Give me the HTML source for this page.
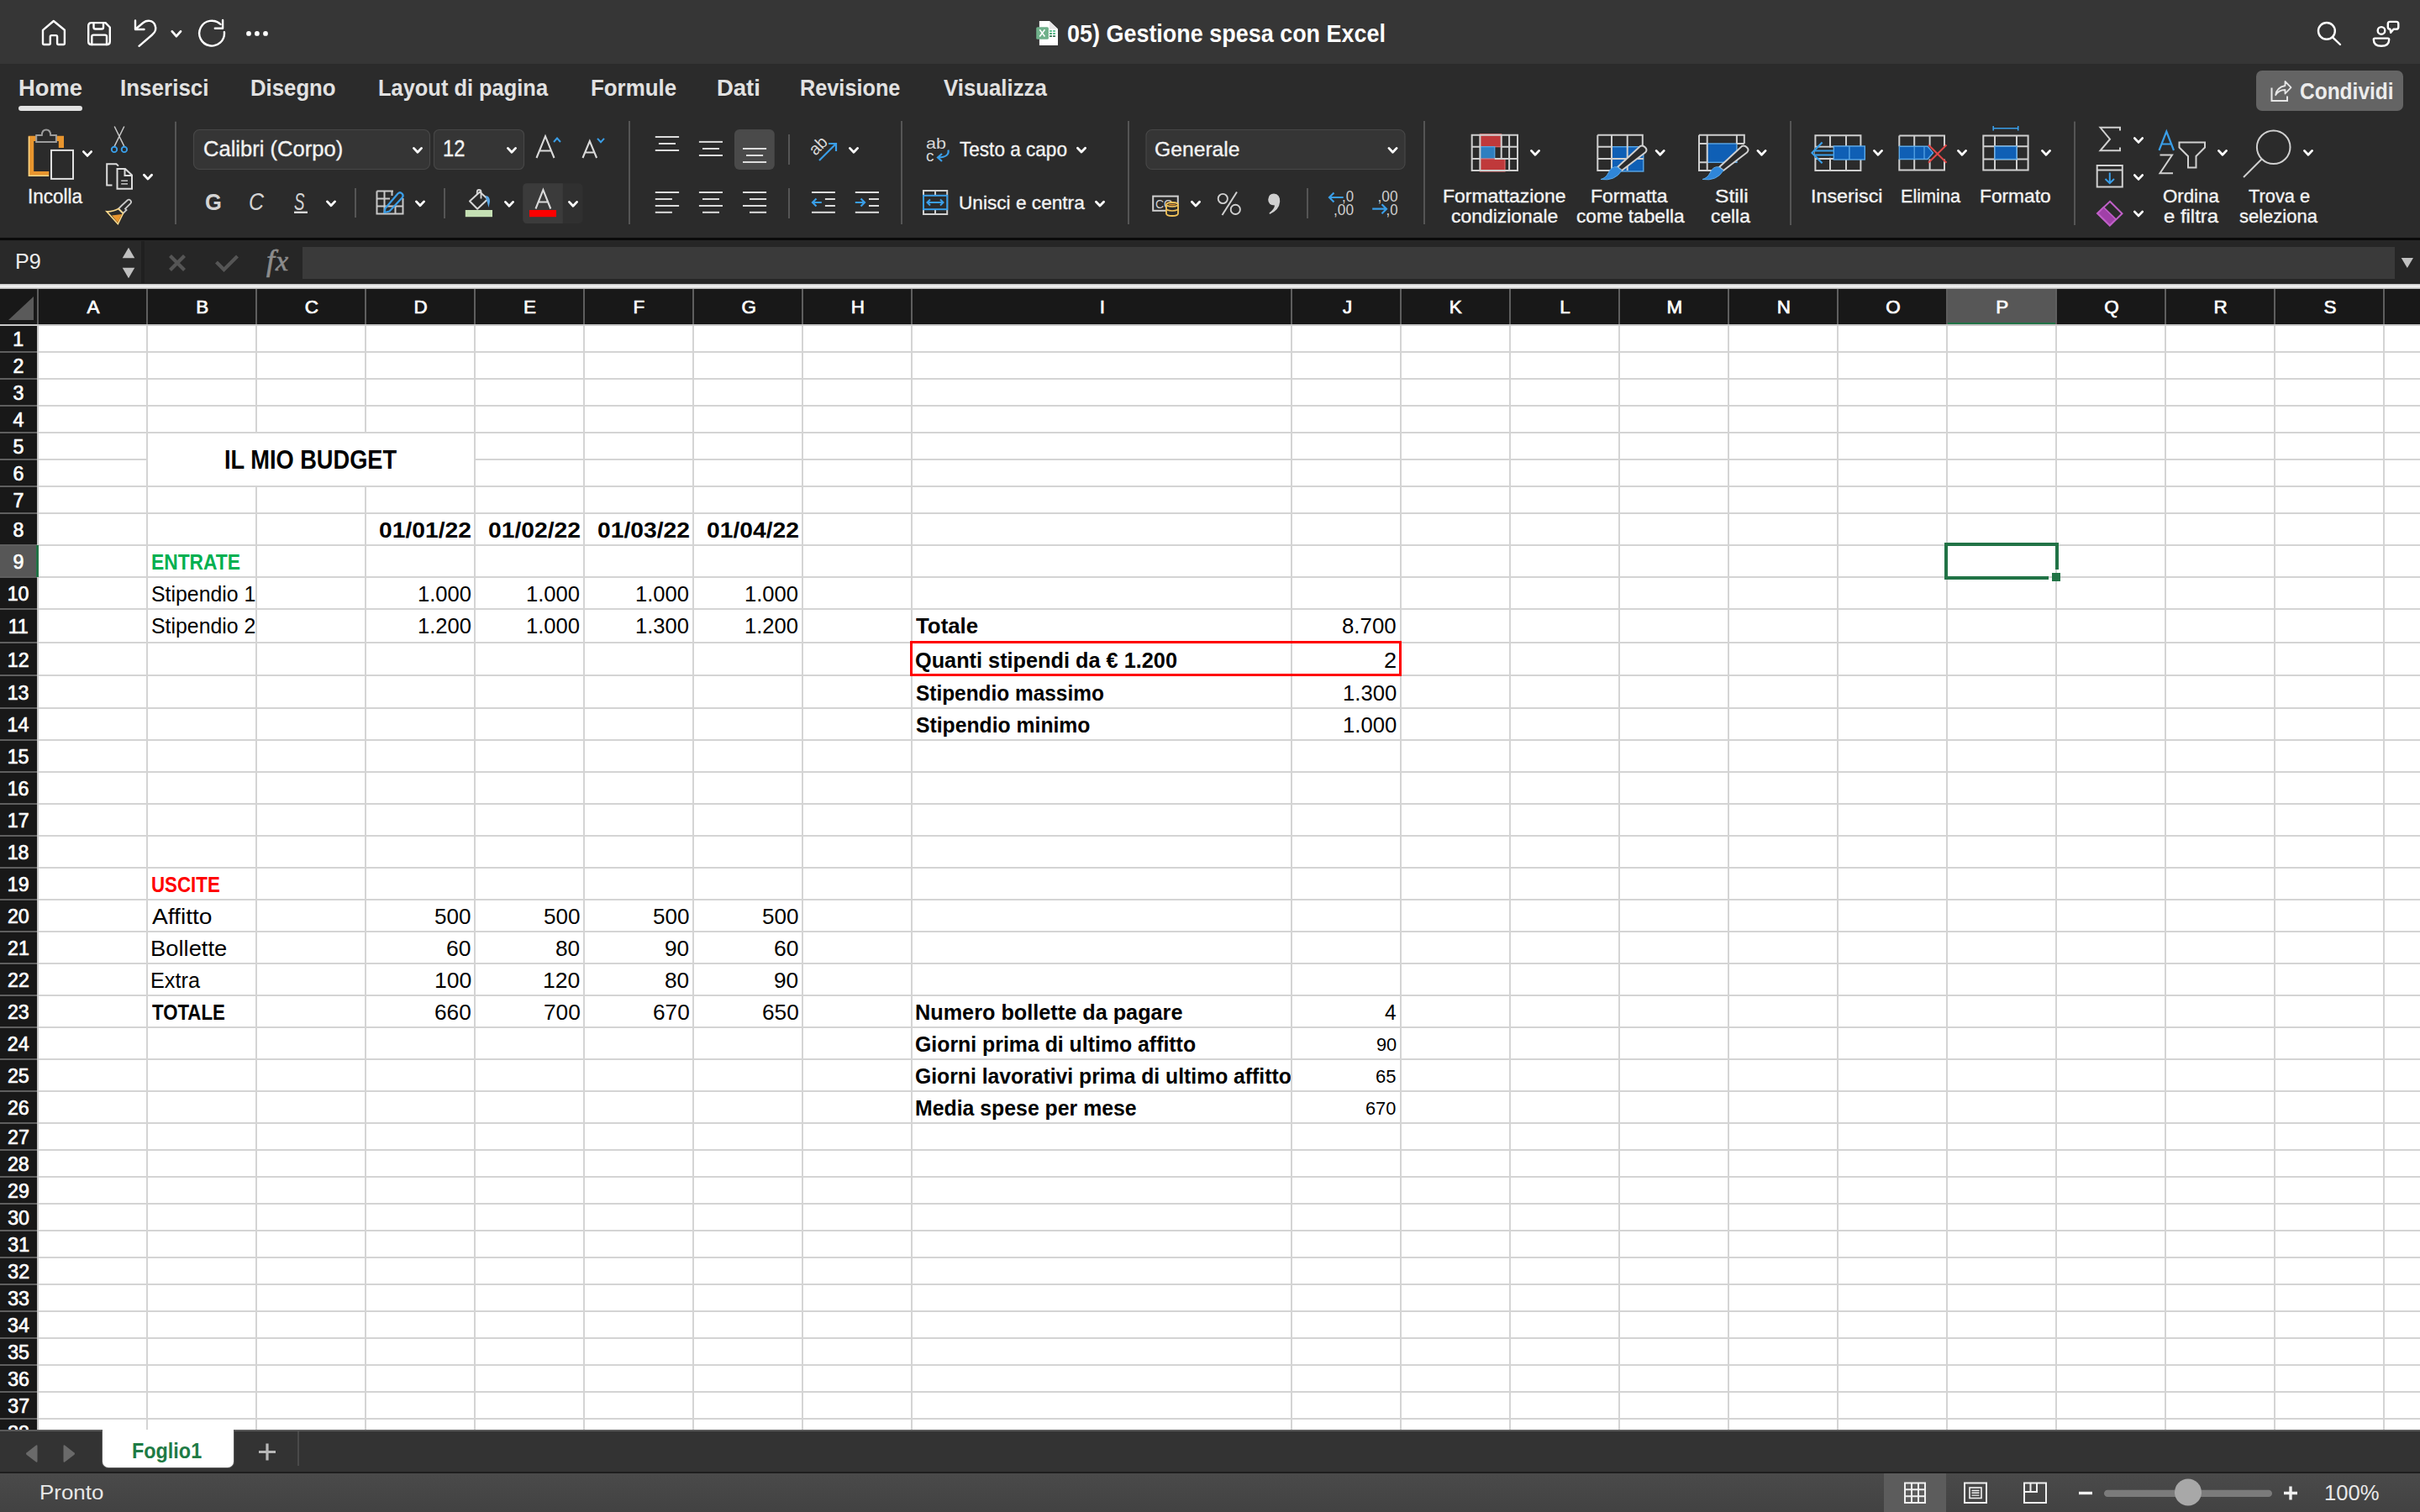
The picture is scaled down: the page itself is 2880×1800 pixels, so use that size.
<!DOCTYPE html>
<html><head><meta charset="utf-8"><style>
html,body{margin:0;padding:0;width:2880px;height:1800px;overflow:hidden;background:#2b2b2b;font-family:"Liberation Sans",sans-serif;}
.t{position:absolute;line-height:0;white-space:pre;transform-origin:0 0;}
svg{overflow:visible}
</style></head><body>
<div style="position:absolute;left:0px;top:0px;width:2880px;height:76px;background:#363636;"></div><div style="position:absolute;left:0px;top:76px;width:2880px;height:208px;background:#2b2b2b;"></div><div style="position:absolute;left:0px;top:283px;width:2880px;height:3px;background:#0a0a0a;"></div><div style="position:absolute;left:0px;top:286px;width:2880px;height:52px;background:#262626;"></div><div style="position:absolute;left:0px;top:287px;width:168px;height:50px;background:#292929;"></div><div style="position:absolute;left:168px;top:287px;width:4px;height:50px;background:#202020;"></div><div style="position:absolute;left:360px;top:294px;width:2490px;height:38px;background:#3a3a3a;"></div><div style="position:absolute;left:0;top:338px;width:2880px;height:6px;background:linear-gradient(#bdbdbd,#f2f2f2 40%,#e6e6e6 70%,#a8a8a8)"></div><div style="position:absolute;left:0px;top:344px;width:2880px;height:42px;background:#181818;"></div><div style="position:absolute;left:46px;top:388px;width:2834px;height:1314px;background:#ffffff;"></div><div style="position:absolute;left:0px;top:386px;width:46px;height:1316px;background:#181818;"></div><div style="position:absolute;left:2317px;top:344px;width:130px;height:40px;background:#575757;"></div><div style="position:absolute;left:2317px;top:384px;width:130px;height:4px;background:#217346;"></div><div style="position:absolute;left:0px;top:649px;width:43px;height:38px;background:#575757;"></div><div style="position:absolute;left:46px;top:418px;width:2834px;height:2px;background:#d4d4d4;"></div><div style="position:absolute;left:0px;top:418px;width:44px;height:2px;background:#5e5e5e;"></div><div style="position:absolute;left:46px;top:450px;width:2834px;height:2px;background:#d4d4d4;"></div><div style="position:absolute;left:0px;top:450px;width:44px;height:2px;background:#5e5e5e;"></div><div style="position:absolute;left:46px;top:482px;width:2834px;height:2px;background:#d4d4d4;"></div><div style="position:absolute;left:0px;top:482px;width:44px;height:2px;background:#5e5e5e;"></div><div style="position:absolute;left:46px;top:514px;width:2834px;height:2px;background:#d4d4d4;"></div><div style="position:absolute;left:0px;top:514px;width:44px;height:2px;background:#5e5e5e;"></div><div style="position:absolute;left:46px;top:546px;width:129px;height:2px;background:#d4d4d4;"></div><div style="position:absolute;left:565px;top:546px;width:2315px;height:2px;background:#d4d4d4;"></div><div style="position:absolute;left:0px;top:546px;width:44px;height:2px;background:#5e5e5e;"></div><div style="position:absolute;left:46px;top:578px;width:2834px;height:2px;background:#d4d4d4;"></div><div style="position:absolute;left:0px;top:578px;width:44px;height:2px;background:#5e5e5e;"></div><div style="position:absolute;left:46px;top:610px;width:2834px;height:2px;background:#d4d4d4;"></div><div style="position:absolute;left:0px;top:610px;width:44px;height:2px;background:#5e5e5e;"></div><div style="position:absolute;left:46px;top:648px;width:2834px;height:2px;background:#d4d4d4;"></div><div style="position:absolute;left:0px;top:648px;width:44px;height:2px;background:#5e5e5e;"></div><div style="position:absolute;left:46px;top:686px;width:2834px;height:2px;background:#d4d4d4;"></div><div style="position:absolute;left:0px;top:686px;width:44px;height:2px;background:#5e5e5e;"></div><div style="position:absolute;left:46px;top:724px;width:2834px;height:2px;background:#d4d4d4;"></div><div style="position:absolute;left:0px;top:724px;width:44px;height:2px;background:#5e5e5e;"></div><div style="position:absolute;left:46px;top:764px;width:2834px;height:2px;background:#d4d4d4;"></div><div style="position:absolute;left:0px;top:764px;width:44px;height:2px;background:#5e5e5e;"></div><div style="position:absolute;left:46px;top:803px;width:2834px;height:2px;background:#d4d4d4;"></div><div style="position:absolute;left:0px;top:803px;width:44px;height:2px;background:#5e5e5e;"></div><div style="position:absolute;left:46px;top:842px;width:2834px;height:2px;background:#d4d4d4;"></div><div style="position:absolute;left:0px;top:842px;width:44px;height:2px;background:#5e5e5e;"></div><div style="position:absolute;left:46px;top:880px;width:2834px;height:2px;background:#d4d4d4;"></div><div style="position:absolute;left:0px;top:880px;width:44px;height:2px;background:#5e5e5e;"></div><div style="position:absolute;left:46px;top:918px;width:2834px;height:2px;background:#d4d4d4;"></div><div style="position:absolute;left:0px;top:918px;width:44px;height:2px;background:#5e5e5e;"></div><div style="position:absolute;left:46px;top:956px;width:2834px;height:2px;background:#d4d4d4;"></div><div style="position:absolute;left:0px;top:956px;width:44px;height:2px;background:#5e5e5e;"></div><div style="position:absolute;left:46px;top:994px;width:2834px;height:2px;background:#d4d4d4;"></div><div style="position:absolute;left:0px;top:994px;width:44px;height:2px;background:#5e5e5e;"></div><div style="position:absolute;left:46px;top:1032px;width:2834px;height:2px;background:#d4d4d4;"></div><div style="position:absolute;left:0px;top:1032px;width:44px;height:2px;background:#5e5e5e;"></div><div style="position:absolute;left:46px;top:1070px;width:2834px;height:2px;background:#d4d4d4;"></div><div style="position:absolute;left:0px;top:1070px;width:44px;height:2px;background:#5e5e5e;"></div><div style="position:absolute;left:46px;top:1108px;width:2834px;height:2px;background:#d4d4d4;"></div><div style="position:absolute;left:0px;top:1108px;width:44px;height:2px;background:#5e5e5e;"></div><div style="position:absolute;left:46px;top:1146px;width:2834px;height:2px;background:#d4d4d4;"></div><div style="position:absolute;left:0px;top:1146px;width:44px;height:2px;background:#5e5e5e;"></div><div style="position:absolute;left:46px;top:1184px;width:2834px;height:2px;background:#d4d4d4;"></div><div style="position:absolute;left:0px;top:1184px;width:44px;height:2px;background:#5e5e5e;"></div><div style="position:absolute;left:46px;top:1222px;width:2834px;height:2px;background:#d4d4d4;"></div><div style="position:absolute;left:0px;top:1222px;width:44px;height:2px;background:#5e5e5e;"></div><div style="position:absolute;left:46px;top:1260px;width:2834px;height:2px;background:#d4d4d4;"></div><div style="position:absolute;left:0px;top:1260px;width:44px;height:2px;background:#5e5e5e;"></div><div style="position:absolute;left:46px;top:1298px;width:2834px;height:2px;background:#d4d4d4;"></div><div style="position:absolute;left:0px;top:1298px;width:44px;height:2px;background:#5e5e5e;"></div><div style="position:absolute;left:46px;top:1336px;width:2834px;height:2px;background:#d4d4d4;"></div><div style="position:absolute;left:0px;top:1336px;width:44px;height:2px;background:#5e5e5e;"></div><div style="position:absolute;left:46px;top:1368px;width:2834px;height:2px;background:#d4d4d4;"></div><div style="position:absolute;left:0px;top:1368px;width:44px;height:2px;background:#5e5e5e;"></div><div style="position:absolute;left:46px;top:1400px;width:2834px;height:2px;background:#d4d4d4;"></div><div style="position:absolute;left:0px;top:1400px;width:44px;height:2px;background:#5e5e5e;"></div><div style="position:absolute;left:46px;top:1432px;width:2834px;height:2px;background:#d4d4d4;"></div><div style="position:absolute;left:0px;top:1432px;width:44px;height:2px;background:#5e5e5e;"></div><div style="position:absolute;left:46px;top:1464px;width:2834px;height:2px;background:#d4d4d4;"></div><div style="position:absolute;left:0px;top:1464px;width:44px;height:2px;background:#5e5e5e;"></div><div style="position:absolute;left:46px;top:1496px;width:2834px;height:2px;background:#d4d4d4;"></div><div style="position:absolute;left:0px;top:1496px;width:44px;height:2px;background:#5e5e5e;"></div><div style="position:absolute;left:46px;top:1528px;width:2834px;height:2px;background:#d4d4d4;"></div><div style="position:absolute;left:0px;top:1528px;width:44px;height:2px;background:#5e5e5e;"></div><div style="position:absolute;left:46px;top:1560px;width:2834px;height:2px;background:#d4d4d4;"></div><div style="position:absolute;left:0px;top:1560px;width:44px;height:2px;background:#5e5e5e;"></div><div style="position:absolute;left:46px;top:1592px;width:2834px;height:2px;background:#d4d4d4;"></div><div style="position:absolute;left:0px;top:1592px;width:44px;height:2px;background:#5e5e5e;"></div><div style="position:absolute;left:46px;top:1624px;width:2834px;height:2px;background:#d4d4d4;"></div><div style="position:absolute;left:0px;top:1624px;width:44px;height:2px;background:#5e5e5e;"></div><div style="position:absolute;left:46px;top:1656px;width:2834px;height:2px;background:#d4d4d4;"></div><div style="position:absolute;left:0px;top:1656px;width:44px;height:2px;background:#5e5e5e;"></div><div style="position:absolute;left:46px;top:1688px;width:2834px;height:2px;background:#d4d4d4;"></div><div style="position:absolute;left:0px;top:1688px;width:44px;height:2px;background:#5e5e5e;"></div><div style="position:absolute;left:174px;top:388px;width:2px;height:1314px;background:#d4d4d4;"></div><div style="position:absolute;left:174px;top:344px;width:2px;height:42px;background:#5e5e5e;"></div><div style="position:absolute;left:304px;top:388px;width:2px;height:127px;background:#d4d4d4;"></div><div style="position:absolute;left:304px;top:579px;width:2px;height:1123px;background:#d4d4d4;"></div><div style="position:absolute;left:304px;top:344px;width:2px;height:42px;background:#5e5e5e;"></div><div style="position:absolute;left:434px;top:388px;width:2px;height:127px;background:#d4d4d4;"></div><div style="position:absolute;left:434px;top:579px;width:2px;height:1123px;background:#d4d4d4;"></div><div style="position:absolute;left:434px;top:344px;width:2px;height:42px;background:#5e5e5e;"></div><div style="position:absolute;left:564px;top:388px;width:2px;height:1314px;background:#d4d4d4;"></div><div style="position:absolute;left:564px;top:344px;width:2px;height:42px;background:#5e5e5e;"></div><div style="position:absolute;left:694px;top:388px;width:2px;height:1314px;background:#d4d4d4;"></div><div style="position:absolute;left:694px;top:344px;width:2px;height:42px;background:#5e5e5e;"></div><div style="position:absolute;left:824px;top:388px;width:2px;height:1314px;background:#d4d4d4;"></div><div style="position:absolute;left:824px;top:344px;width:2px;height:42px;background:#5e5e5e;"></div><div style="position:absolute;left:954px;top:388px;width:2px;height:1314px;background:#d4d4d4;"></div><div style="position:absolute;left:954px;top:344px;width:2px;height:42px;background:#5e5e5e;"></div><div style="position:absolute;left:1084px;top:388px;width:2px;height:1314px;background:#d4d4d4;"></div><div style="position:absolute;left:1084px;top:344px;width:2px;height:42px;background:#5e5e5e;"></div><div style="position:absolute;left:1536px;top:388px;width:2px;height:1314px;background:#d4d4d4;"></div><div style="position:absolute;left:1536px;top:344px;width:2px;height:42px;background:#5e5e5e;"></div><div style="position:absolute;left:1666px;top:388px;width:2px;height:1314px;background:#d4d4d4;"></div><div style="position:absolute;left:1666px;top:344px;width:2px;height:42px;background:#5e5e5e;"></div><div style="position:absolute;left:1796px;top:388px;width:2px;height:1314px;background:#d4d4d4;"></div><div style="position:absolute;left:1796px;top:344px;width:2px;height:42px;background:#5e5e5e;"></div><div style="position:absolute;left:1926px;top:388px;width:2px;height:1314px;background:#d4d4d4;"></div><div style="position:absolute;left:1926px;top:344px;width:2px;height:42px;background:#5e5e5e;"></div><div style="position:absolute;left:2056px;top:388px;width:2px;height:1314px;background:#d4d4d4;"></div><div style="position:absolute;left:2056px;top:344px;width:2px;height:42px;background:#5e5e5e;"></div><div style="position:absolute;left:2186px;top:388px;width:2px;height:1314px;background:#d4d4d4;"></div><div style="position:absolute;left:2186px;top:344px;width:2px;height:42px;background:#5e5e5e;"></div><div style="position:absolute;left:2316px;top:388px;width:2px;height:1314px;background:#d4d4d4;"></div><div style="position:absolute;left:2316px;top:344px;width:2px;height:42px;background:#5e5e5e;"></div><div style="position:absolute;left:2446px;top:388px;width:2px;height:1314px;background:#d4d4d4;"></div><div style="position:absolute;left:2446px;top:344px;width:2px;height:42px;background:#5e5e5e;"></div><div style="position:absolute;left:2576px;top:388px;width:2px;height:1314px;background:#d4d4d4;"></div><div style="position:absolute;left:2576px;top:344px;width:2px;height:42px;background:#5e5e5e;"></div><div style="position:absolute;left:2706px;top:388px;width:2px;height:1314px;background:#d4d4d4;"></div><div style="position:absolute;left:2706px;top:344px;width:2px;height:42px;background:#5e5e5e;"></div><div style="position:absolute;left:2836px;top:388px;width:2px;height:1314px;background:#d4d4d4;"></div><div style="position:absolute;left:2836px;top:344px;width:2px;height:42px;background:#5e5e5e;"></div><div style="position:absolute;left:0px;top:386px;width:2880px;height:2px;background:#c8c8c8;"></div><div style="position:absolute;left:44px;top:344px;width:2px;height:1358px;background:#c8c8c8;"></div><div style="position:absolute;left:44px;top:344px;width:2px;height:42px;background:#5e5e5e;"></div><div style="position:absolute;left:43px;top:649px;width:3px;height:38px;background:#217346;"></div><svg style="position:absolute;left:0px;top:344px;" width="46" height="42" viewBox="0 0 46 42" fill="none"><path d="M10 37 L40 9 L40 37 Z" fill="#5a5a5a"/></svg><div style="position:absolute;left:2314px;top:646px;width:136px;height:4px;background:#217346;"></div><div style="position:absolute;left:2314px;top:646px;width:4px;height:44px;background:#217346;"></div><div style="position:absolute;left:2314px;top:686px;width:124px;height:4px;background:#217346;"></div><div style="position:absolute;left:2446px;top:646px;width:4px;height:32px;background:#217346;"></div><div style="position:absolute;left:2442px;top:682px;width:10px;height:10px;background:#217346;"></div><div style="position:absolute;left:1083px;top:763px;width:585px;height:42px;box-sizing:border-box;border:3px solid #ff0000"></div><svg style="position:absolute;left:0px;top:0px;" width="400" height="76" viewBox="0 0 400 76" fill="none"><path d="M63.8 25 L51 35.8 L51 51.5 Q51 53 52.5 53 L58.3 53 Q59.8 53 59.8 51.5 L59.8 43.6 Q59.8 42.1 61.3 42.1 L66.6 42.1 Q68.1 42.1 68.1 43.6 L68.1 51.5 Q68.1 53 69.6 53 L75.4 53 Q76.9 53 76.9 51.5 L76.9 35.8 Z" stroke="#ffffff" stroke-width="2.4" stroke-linecap="round" stroke-linejoin="round"/><path d="M68.5 11.1 L85.5 11.1 L90.8 16.5 L90.8 33.5 Q90.8 37 87.3 37 L68.7 37 Q65.2 37 65.2 33.5 L65.2 14.6 Q65.2 11.1 68.7 11.1 Z" transform="translate(40,16)" stroke="#ffffff" stroke-width="2.4" stroke-linecap="round" stroke-linejoin="round"/><path d="M71.5 11.1 L71.5 16.5 Q71.5 18.5 73.5 18.5 L81 18.5 Q83 18.5 83 16.5 L83 11.1" transform="translate(40,16)" stroke="#ffffff" stroke-width="2.4" stroke-linecap="round" stroke-linejoin="round"/><path d="M69.3 37 L69.3 27.6 Q69.3 25.6 71.3 25.6 L85 25.6 Q87 25.6 87 27.6 L87 37" transform="translate(40,16)" stroke="#ffffff" stroke-width="2.4" stroke-linecap="round" stroke-linejoin="round"/><path d="M161 24.5 L161 35 L171.5 35" stroke="#ffffff" stroke-width="2.4" stroke-linecap="round" stroke-linejoin="round" stroke-linecap="butt" stroke-linejoin="miter"/><path d="M161.5 34.5 L170.5 27 C175 23.5 182 24 184.3 29.5 C186.2 34 184.8 38.5 181 41.5 L165.5 54.8" stroke="#ffffff" stroke-width="2.4" stroke-linecap="round" stroke-linejoin="round"/><path d="M204.8 37.4 L209.9 43.2 L215 37.4" stroke="#fff" stroke-width="2.8" stroke-linecap="round" stroke-linejoin="round"/><path d="M266.9 38.1 A14.9 14.9 0 1 1 262.5 29" stroke="#ffffff" stroke-width="2.4" stroke-linecap="round" stroke-linejoin="round" stroke-linecap="butt"/><path d="M255.8 33.8 L265.1 33.8 L265.1 24" stroke="#ffffff" stroke-width="2.4" stroke-linecap="round" stroke-linejoin="round" stroke-linecap="butt" stroke-linejoin="miter"/><circle cx="296" cy="39.9" r="2.9" fill="#fff"/><circle cx="305.9" cy="39.9" r="2.9" fill="#fff"/><circle cx="316" cy="39.9" r="2.9" fill="#fff"/></svg><svg style="position:absolute;left:1230px;top:22px;" width="34" height="36" viewBox="0 0 34 36" fill="none"><path d="M6.9 2.9 L18.9 2.9 L29 12.4 L29 32 L6.9 32 Z" fill="#ffffff"/><path d="M18.9 2.9 L18.9 12.4 L29 12.4" fill="#e8e8e8"/><rect x="3.2" y="10.2" width="14.7" height="14.55" rx="1.5" fill="#6fb08a"/><path d="M7.3 13.3 L13.4 21.4 M13.4 13.3 L7.3 21.4" stroke="#fff" stroke-width="1.6"/><rect x="19" y="14" width="3" height="1.9" fill="#5fbf8f"/><rect x="23" y="14" width="3" height="1.9" fill="#5fc495"/><rect x="19" y="17.1" width="3" height="1.8" fill="#3f9f6c"/><rect x="23" y="17.1" width="3" height="1.8" fill="#4fb585"/><rect x="19" y="20.2" width="3" height="1.8" fill="#3c7a5a"/><rect x="23" y="20.2" width="3" height="1.8" fill="#3c7a5a"/></svg><svg style="position:absolute;left:2740px;top:16px;" width="140" height="48" viewBox="0 0 140 48" fill="none"><circle cx="28.9" cy="20.9" r="9.9" stroke="#ffffff" stroke-width="2.4" stroke-linecap="round" stroke-linejoin="round"/><path d="M36.5 28.8 L45 37" stroke="#ffffff" stroke-width="2.4" stroke-linecap="round" stroke-linejoin="round"/><circle cx="94" cy="20.4" r="4.3" stroke="#ffffff" stroke-width="2.4" stroke-linecap="round" stroke-linejoin="round"/><path d="M86.2 29.6 L101.8 29.6 Q103.2 29.6 103.2 31 Q103.2 38.8 94 38.8 Q84.8 38.8 84.8 31 Q84.8 29.6 86.2 29.6 Z" stroke="#ffffff" stroke-width="2.4" stroke-linecap="round" stroke-linejoin="round"/><path d="M104.2 9.9 L111.8 9.9 Q114.3 9.9 114.3 12.4 L114.3 16.3 Q114.3 18.8 111.8 18.8 L108.5 18.8 L105.2 22.8 L104.5 18.8 Q101.8 18.8 101.8 16.3 L101.8 12.4 Q101.8 9.9 104.2 9.9 Z" stroke="#ffffff" stroke-width="2.4" stroke-linecap="round" stroke-linejoin="round"/></svg><div style="position:absolute;left:22px;top:126px;width:76px;height:6px;background:#e2e2e2;border-radius:3px;"></div><div style="position:absolute;left:2685px;top:84px;width:175px;height:48px;background:#646464;border-radius:7px;"></div><svg style="position:absolute;left:0;top:140px" width="2880" height="145" viewBox="0 140 2880 145" fill="none"><path d="M33.75 161.8 H45 V168 H40.2 V203.9 H58.3 V209.9 H33.75 Z" fill="#e8952e"/><path d="M66 161.8 H76 V175.9 H69.8 V168 H66 Z" fill="#e8952e"/><path d="M34.5 162.5 V209.2 H58" stroke="#fbd98b" stroke-width="1.4" fill="none"/><path d="M43.2 161 H49.8 Q50 154.5 55 154.5 Q60 154.5 60.2 161 H66.9 V168.9 H43.2 Z" stroke="#9c9c9c" stroke-width="2" fill="#2b2b2b"/><rect x="61" y="178.9" width="26" height="34" stroke="#e0e0e0" stroke-width="2" fill="none"/><path d="M99.4 180.6 L104 185.39999999999998 L108.6 180.6" stroke="#ffffff" stroke-width="2.8" stroke-linecap="round" stroke-linejoin="round" fill="none"/><path d="M136.2 150.5 L147.8 174.2 M147.8 150.5 L136.2 174.2" stroke="#c8c8c8" stroke-width="1.5"/><circle cx="136" cy="177.9" r="3.2" stroke="#3a9ee8" stroke-width="1.9" fill="none"/><circle cx="147.9" cy="177.9" r="3.2" stroke="#3a9ee8" stroke-width="1.9" fill="none"/><path d="M133.5 220.5 H127.2 V195.2 H138.5 L141 197.6" stroke="#dcdcdc" stroke-width="2" fill="none"/><path d="M139.5 201 H149 L157 208.5 V224.8 H139.5 Z M148.5 201 V209 H157" stroke="#dcdcdc" stroke-width="2" fill="none"/><rect x="144.2" y="214.39999999999998" width="7.800000000000011" height="1.6" fill="#bdbdbd"/><rect x="144.2" y="218.1" width="7.800000000000011" height="1.6" fill="#bdbdbd"/><path d="M171.4 208.3 L176 213.1 L180.6 208.3" stroke="#ffffff" stroke-width="2.8" stroke-linecap="round" stroke-linejoin="round" fill="none"/><path d="M145 244.5 L151.5 238.5 Q153.5 236.8 155.3 238.6 Q157 240.4 155.2 242.3 L149 248.5 L150.5 250 L146.5 254 L141 248.5 Z" stroke="#c8c8c8" stroke-width="1.8" fill="none"/><path d="M141 248.5 Q133 252.5 127 251.8 L140.3 266.5 L146.5 254 Z" stroke="#fbd98b" stroke-width="1.6" fill="none"/><path d="M133 256.5 L145 255 L140.3 265 Z" fill="#e8952e"/><rect x="208" y="144.7" width="2" height="122.30000000000001" fill="#555555"/><rect x="230.5" y="154.5" width="281" height="47" rx="7" fill="#353535" stroke="#474747" stroke-width="1.2"/><path d="M492.4 176.4 L497 181.2 L501.6 176.4" stroke="#ffffff" stroke-width="2.8" stroke-linecap="round" stroke-linejoin="round" fill="none"/><rect x="516.5" y="154.5" width="107" height="47" rx="6" fill="#353535" stroke="#474747" stroke-width="1.2"/><path d="M604.4 176.4 L609 181.2 L613.6 176.4" stroke="#ffffff" stroke-width="2.8" stroke-linecap="round" stroke-linejoin="round" fill="none"/><path d="M638.5 188 L649 162.2 L659.5 188 M642.3 179.5 H655.7" stroke="#dadada" stroke-width="2.1" fill="none"/><path d="M659 169 L663 164.6 L667 169" stroke="#3a9ee8" stroke-width="2" fill="none"/><path d="M693.5 188 L701.8 168 L710.1 188 M696.4 181.5 H707.2" stroke="#dadada" stroke-width="2.1" fill="none"/><path d="M711 164.8 L715 169.2 L719 164.8" stroke="#3a9ee8" stroke-width="2" fill="none"/><rect x="350" y="251.6" width="16" height="2.4" fill="#d8d8d8"/><path d="M389.4 239.9 L394 244.7 L398.6 239.9" stroke="#ffffff" stroke-width="2.8" stroke-linecap="round" stroke-linejoin="round" fill="none"/><rect x="422" y="224" width="2" height="35" fill="#555555"/><path d="M448.5 227.4 H468 M448.5 227.4 V254.6 H479.5 V236 M448.5 236.5 H464 M448.5 245.5 H479.5 M457.5 227.4 V254.6 M466.5 227.4 V233 M470.5 245.5 V254.6" stroke="#c8c8c8" stroke-width="2" fill="none"/><path d="M458.5 248 L473.5 230.5 Q476 228 478.5 230.5 Q480.8 233 478.5 235.5 L463.5 251.5 L457.5 253 Z" stroke="#3a9ee8" stroke-width="2.2" fill="none" stroke-linejoin="round"/><path d="M495.4 239.9 L500 244.7 L504.6 239.9" stroke="#ffffff" stroke-width="2.8" stroke-linecap="round" stroke-linejoin="round" fill="none"/><rect x="528" y="224" width="2" height="36" fill="#555555"/><path d="M559 239.5 L571 228.5 L580.5 237 L568.2 248.8 Z" stroke="#d8d8d8" stroke-width="2" fill="none" stroke-linejoin="round"/><path d="M572.5 236.5 V228.5 Q572.5 226 570 226 Q567.8 226 567.8 228.5 V232" stroke="#d8d8d8" stroke-width="1.8" fill="none"/><path d="M577.8 233 Q583 233 583 240 L581.5 247 Q580 241 578.5 236 Z" fill="#5aa8e8"/><rect x="553.8" y="250" width="32.2" height="8.2" fill="#c5e0b4"/><path d="M601.4 240.4 L606 245.2 L610.6 240.4" stroke="#ffffff" stroke-width="2.8" stroke-linecap="round" stroke-linejoin="round" fill="none"/><rect x="622.3" y="218.2" width="71.3" height="47.8" rx="5" fill="#303030"/><path d="M627.3 218.2 H669.8 V266 H627.3 Q622.3 266 622.3 261 V223.2 Q622.3 218.2 627.3 218.2 Z" fill="#3b3b3b"/><path d="M637.5 248.5 L646.4 226 L655.3 248.5 M640.8 240.5 H652" stroke="#dadada" stroke-width="2.1" fill="none"/><rect x="630" y="250" width="32" height="8.2" fill="#ff0000"/><path d="M677.4 240.4 L682 245.2 L686.6 240.4" stroke="#ffffff" stroke-width="2.8" stroke-linecap="round" stroke-linejoin="round" fill="none"/><rect x="748" y="144" width="2" height="123" fill="#555555"/><rect x="779.8" y="162.0" width="28.300000000000068" height="2" fill="#dcdcdc"/><rect x="779.8" y="178.0" width="28.300000000000068" height="2" fill="#dcdcdc"/><rect x="783.9" y="170.0" width="20.100000000000023" height="2" fill="#dcdcdc"/><rect x="831.9" y="167.9" width="28.100000000000023" height="2" fill="#dcdcdc"/><rect x="831.9" y="184.0" width="28.100000000000023" height="2" fill="#dcdcdc"/><rect x="836" y="176.0" width="20" height="2" fill="#dcdcdc"/><rect x="874" y="153.9" width="47.8" height="48" rx="6" fill="#4a4a4a"/><rect x="884" y="176.0" width="28.100000000000023" height="2" fill="#dcdcdc"/><rect x="884" y="192.0" width="28.100000000000023" height="2" fill="#dcdcdc"/><rect x="888" y="184.0" width="20.100000000000023" height="2" fill="#dcdcdc"/><rect x="938" y="160" width="2" height="36" fill="#555555"/><text x="0" y="0" transform="translate(970.5,186) rotate(-45)" font-family="Liberation Sans" font-size="20" fill="#d8d8d8">ab</text><path d="M975 191 L995 171 M986 171 H995 V180" stroke="#3a9ee8" stroke-width="2.2" fill="none"/><path d="M1011.4 176.4 L1016 181.2 L1020.6 176.4" stroke="#ffffff" stroke-width="2.8" stroke-linecap="round" stroke-linejoin="round" fill="none"/><rect x="779.8" y="228.0" width="28.300000000000068" height="2" fill="#dcdcdc"/><rect x="779.8" y="244.0" width="28.300000000000068" height="2" fill="#dcdcdc"/><rect x="779.8" y="236.0" width="20.100000000000023" height="2" fill="#dcdcdc"/><rect x="779.8" y="251.8" width="20.100000000000023" height="2" fill="#dcdcdc"/><rect x="831.9" y="228.0" width="28.100000000000023" height="2" fill="#dcdcdc"/><rect x="831.9" y="244.0" width="28.100000000000023" height="2" fill="#dcdcdc"/><rect x="836" y="236.0" width="20" height="2" fill="#dcdcdc"/><rect x="836" y="251.8" width="20" height="2" fill="#dcdcdc"/><rect x="884" y="228.0" width="28.100000000000023" height="2" fill="#dcdcdc"/><rect x="884" y="244.0" width="28.100000000000023" height="2" fill="#dcdcdc"/><rect x="892" y="236.0" width="20.100000000000023" height="2" fill="#dcdcdc"/><rect x="892" y="251.8" width="20.100000000000023" height="2" fill="#dcdcdc"/><rect x="938" y="224" width="2" height="36" fill="#555555"/><rect x="966" y="228.0" width="27.899999999999977" height="2" fill="#dcdcdc"/><rect x="1017.8" y="228.0" width="28.200000000000045" height="2" fill="#dcdcdc"/><rect x="966" y="251.8" width="27.899999999999977" height="2" fill="#dcdcdc"/><rect x="1017.8" y="251.8" width="28.200000000000045" height="2" fill="#dcdcdc"/><rect x="981.9" y="236.0" width="12.0" height="2" fill="#dcdcdc"/><rect x="1034" y="236.0" width="12" height="2" fill="#dcdcdc"/><rect x="981.9" y="244.0" width="12.0" height="2" fill="#dcdcdc"/><rect x="1034" y="244.0" width="12" height="2" fill="#dcdcdc"/><path d="M967 241 H977.8 M971.5 236.5 L967 241 L971.5 245.5" stroke="#3a9ee8" stroke-width="2.2" fill="none"/><path d="M1017.8 241 H1029 M1024.5 236.5 L1029 241 L1024.5 245.5" stroke="#3a9ee8" stroke-width="2.2" fill="none"/><rect x="1072" y="144" width="2" height="123" fill="#555555"/><text x="1102" y="177.3" font-family="Liberation Sans" font-size="19" fill="#d8d8d8" textLength="24" lengthAdjust="spacingAndGlyphs">ab</text><text x="1102" y="192" font-family="Liberation Sans" font-size="19" fill="#d8d8d8">c</text><path d="M1128.5 178.5 Q1130 187 1117 187.5 M1121 183 L1116 187.5 L1121 192" stroke="#3a9ee8" stroke-width="2.2" fill="none"/><path d="M1282.4 176.20000000000002 L1287 181.0 L1291.6 176.20000000000002" stroke="#ffffff" stroke-width="2.8" stroke-linecap="round" stroke-linejoin="round" fill="none"/><path d="M1099 227 H1127.2 V255 H1099 Z M1113 227 V232 M1113 250 V255" stroke="#d0d0d0" stroke-width="2" fill="none"/><rect x="1099" y="232.8" width="28.2" height="16.4" stroke="#3a9ee8" stroke-width="2" fill="#2b2b2b"/><path d="M1103.5 241 H1122.5 M1107 237.5 L1103.5 241 L1107 244.5 M1119 237.5 L1122.5 241 L1119 244.5" stroke="#3a9ee8" stroke-width="2" fill="none"/><path d="M1304.4 240.20000000000002 L1309 245.0 L1313.6 240.20000000000002" stroke="#ffffff" stroke-width="2.8" stroke-linecap="round" stroke-linejoin="round" fill="none"/><rect x="1342" y="144" width="2" height="123" fill="#555555"/><rect x="1364" y="154.5" width="308" height="47" rx="7" fill="#353535" stroke="#474747" stroke-width="1.2"/><path d="M1652.9 176.4 L1657.5 181.2 L1662.1 176.4" stroke="#ffffff" stroke-width="2.8" stroke-linecap="round" stroke-linejoin="round" fill="none"/><rect x="1372.2" y="233.6" width="29.6" height="17.2" stroke="#d0d0d0" stroke-width="2" fill="none"/><text x="1375" y="248" font-family="Liberation Sans" font-size="14" fill="#d0d0d0">CO</text><path d="M1388 244 Q1388 241 1395 241 Q1402 241 1402 244 V254 Q1402 257 1395 257 Q1388 257 1388 254 Z" stroke="#f2c45a" stroke-width="1.8" fill="#2b2b2b"/><path d="M1388 244.5 Q1395 247.5 1402 244.5 M1388 249.5 Q1395 252.5 1402 249.5" stroke="#f2c45a" stroke-width="1.6" fill="none"/><path d="M1390 243.5 Q1395 245.5 1400 243.5 Q1395 241.8 1390 243.5Z" fill="#e8952e"/><path d="M1418.4 240.3 L1423 245.1 L1427.6 240.3" stroke="#ffffff" stroke-width="2.8" stroke-linecap="round" stroke-linejoin="round" fill="none"/><circle cx="1455.3" cy="236.5" r="5.6" stroke="#d0d0d0" stroke-width="1.9"/><circle cx="1470.3" cy="249.4" r="5.6" stroke="#d0d0d0" stroke-width="1.9"/><path d="M1454.5 256 L1472 228.5" stroke="#d0d0d0" stroke-width="2"/><path d="M1516 230.5 Q1523.5 231 1523.2 240 Q1522.5 250 1511 255 L1510.5 253.5 Q1516.5 249 1517 244.5 Q1509 244 1509.2 237.5 Q1509.8 230.5 1516 230.5 Z" fill="#d0d0d0"/><rect x="1555" y="224" width="2" height="36" fill="#555555"/><text x="1597" y="240" font-family="Liberation Sans" font-size="19" fill="#d0d0d0" textLength="14" lengthAdjust="spacingAndGlyphs">,0</text><text x="1587" y="256" font-family="Liberation Sans" font-size="19" fill="#d0d0d0" textLength="24" lengthAdjust="spacingAndGlyphs">,00</text><path d="M1582 235 H1598.7 M1587.5 229.5 L1582 235 L1587.5 240.5" stroke="#3a9ee8" stroke-width="2.2" fill="none"/><text x="1639.5" y="240" font-family="Liberation Sans" font-size="19" fill="#d0d0d0" textLength="24" lengthAdjust="spacingAndGlyphs">,00</text><text x="1649.5" y="256" font-family="Liberation Sans" font-size="19" fill="#d0d0d0" textLength="14" lengthAdjust="spacingAndGlyphs">,0</text><path d="M1633.2 248.7 H1650 M1644.5 243.2 L1650 248.7 L1644.5 254.2" stroke="#3a9ee8" stroke-width="2.2" fill="none"/><rect x="1694" y="144" width="2" height="123" fill="#555555"/><rect x="1761.4" y="159.8" width="25.3" height="14.9" fill="#c0393b" stroke="#e06a6a" stroke-width="1.2"/><rect x="1761.4" y="174.7" width="17.4" height="14.4" fill="#2f7fc0" stroke="#59a8e8" stroke-width="1.2"/><rect x="1761.4" y="189.1" width="29.6" height="14.9" fill="#c0393b" stroke="#e06a6a" stroke-width="1.2"/><path d="M1751.7 160.8 H1806 V203 H1751.7 Z M1751.7 174.7 H1761.4 M1786.7 174.7 H1806 M1778.8 189.1 H1806 M1751.7 189.1 H1761.4 M1786.7 160.8 V189.1 M1796.1 160.8 V203 M1761.4 160.8 V203" stroke="#cfcfcf" stroke-width="2" fill="none"/><path d="M1822.4 179.4 L1827 184.2 L1831.6 179.4" stroke="#ffffff" stroke-width="2.8" stroke-linecap="round" stroke-linejoin="round" fill="none"/><rect x="1918" y="174.7" width="37.8" height="29.3" fill="#0f5fb5" stroke="#5aa8e8" stroke-width="1.4"/><path d="M1901.3 160.8 H1954.8 V174.7 M1901.3 160.8 V203 H1918 M1901.3 174.7 H1918 M1901.3 189.1 H1955.8 M1918 160.8 V203 M1936.7 160.8 V203" stroke="#cfcfcf" stroke-width="2" fill="none"/><path d="M1958 175.5 Q1961 178.5 1958 181.5 L1930 203 L1925 199 L1952 174 Q1955 172.5 1958 175.5 Z" stroke="#d0d0d0" stroke-width="2" fill="#2b2b2b"/><path d="M1925 199 Q1918 197 1914 206 Q1911 212 1905 213.5 Q1922 216 1930 203 Z" fill="#2f86d8" stroke="#5aa8e8" stroke-width="1"/><path d="M1971.1000000000001 179.4 L1975.7 184.2 L1980.3 179.4" stroke="#ffffff" stroke-width="2.8" stroke-linecap="round" stroke-linejoin="round" fill="none"/><rect x="2031.7" y="171" width="35.2" height="22.3" fill="#0f5fb5" stroke="#5aa8e8" stroke-width="1.4"/><path d="M2022 160.8 H2075.8 V171 M2022 160.8 V203 H2045 M2022 171 H2031.7 M2066.9 171 H2075.8 M2022 193.3 H2031.7 M2031.7 160.8 V203 M2066.9 160.8 V171" stroke="#cfcfcf" stroke-width="2" fill="none"/><path d="M2079 175.5 Q2082 178.5 2079 181.5 L2051 203 L2046 199 L2073 174 Q2076 172.5 2079 175.5 Z" stroke="#d0d0d0" stroke-width="2" fill="#2b2b2b"/><path d="M2046 199 Q2039 197 2035 206 Q2032 212 2026 213.5 Q2043 216 2051 203 Z" fill="#2f86d8" stroke="#5aa8e8" stroke-width="1"/><path d="M2091.9 179.4 L2096.5 184.2 L2101.1 179.4" stroke="#ffffff" stroke-width="2.8" stroke-linecap="round" stroke-linejoin="round" fill="none"/><rect x="2130" y="144" width="2" height="124" fill="#555555"/><path d="M2160.4 161.3 H2214.4 V203 H2160.4 Z M2178 161.3 V203 M2197 161.3 V203 M2160.4 174.7 H2214.4 M2160.4 189.1 H2214.4" stroke="#cfcfcf" stroke-width="2" fill="none"/><rect x="2160" y="175.8" width="23" height="12" fill="#2b2b2b"/><rect x="2182.3" y="174" width="37" height="16" fill="#0f5fb5" stroke="#5aa8e8" stroke-width="1.4"/><path d="M2200.9 174 V190" stroke="#5aa8e8" stroke-width="1.4"/><path d="M2182.3 179.5 H2160 M2182.3 184.5 H2160" stroke="#3a9ee8" stroke-width="2"/><path d="M2168.6 169.5 L2156.5 182 L2168.6 194.3" stroke="#3a9ee8" stroke-width="2.2" fill="none"/><path d="M2230.4 179.4 L2235 184.2 L2239.6 179.4" stroke="#ffffff" stroke-width="2.8" stroke-linecap="round" stroke-linejoin="round" fill="none"/><path d="M2260.3 161.5 H2314 V174.25 M2260.3 161.5 V174.25 M2260.3 189.5 V202.6 H2314 V189.5 M2278.2 161.5 V174.25 M2296.6 161.5 V174.25 M2278.2 189.5 V202.6 M2296.6 189.5 V202.6" stroke="#cfcfcf" stroke-width="2" fill="none"/><path d="M2260.3 174.25 H2294 L2300.5 181.9 L2294 189.5 H2260.3 Z" fill="#0f5fb5" stroke="#5aa8e8" stroke-width="1.4"/><path d="M2278.2 175 V189 M2290 175 V189" stroke="#5aa8e8" stroke-width="1.2"/><path d="M2295 172.5 L2316.5 193.8 M2316.5 172.5 L2295 193.8" stroke="#e04848" stroke-width="2"/><path d="M2330.4 179.4 L2335 184.2 L2339.6 179.4" stroke="#ffffff" stroke-width="2.8" stroke-linecap="round" stroke-linejoin="round" fill="none"/><path d="M2360.3 161.5 H2413.6 V202.6 H2360.3 Z M2374 161.5 V202.6 M2400 161.5 V202.6 M2360.3 174.25 H2413.6 M2360.3 189.5 H2413.6" stroke="#cfcfcf" stroke-width="2" fill="none"/><rect x="2374" y="174.25" width="26" height="15.25" fill="#0f5fb5" stroke="#5aa8e8" stroke-width="1.4"/><path d="M2371.5 152.8 H2402.4 M2372.2 150 V155.6 M2401.7 150 V155.6" stroke="#3a9ee8" stroke-width="1.6"/><path d="M2430.4 179.4 L2435 184.2 L2439.6 179.4" stroke="#ffffff" stroke-width="2.8" stroke-linecap="round" stroke-linejoin="round" fill="none"/><rect x="2468" y="144.6" width="2" height="123.4" fill="#555555"/><path d="M2523 155.5 V151.8 H2499.5 L2511 165.7 L2499.5 179.3 H2523 V175.5" stroke="#d0d0d0" stroke-width="2" fill="none"/><path d="M2540.4 164.6 L2545 169.39999999999998 L2549.6 164.6" stroke="#ffffff" stroke-width="2.8" stroke-linecap="round" stroke-linejoin="round" fill="none"/><path d="M2495.7 197 H2525.8 V222.5 H2495.7 Z M2495.7 202.5 H2525.8" stroke="#d0d0d0" stroke-width="2" fill="none"/><path d="M2510.8 205.5 V218 M2505.5 213 L2510.8 218.2 L2516 213" stroke="#3a9ee8" stroke-width="2" fill="none"/><path d="M2540.4 208.6 L2545 213.39999999999998 L2549.6 208.6" stroke="#ffffff" stroke-width="2.8" stroke-linecap="round" stroke-linejoin="round" fill="none"/><path d="M2511 239.8 L2525.5 254.2 L2510.8 268.6 L2496 254 Z" stroke="#c060c8" stroke-width="2" fill="none"/><path d="M2503.5 246.7 L2518 261 L2510.8 268 L2496.6 254 Z" fill="#a040a8" stroke="#c060c8" stroke-width="1.6"/><path d="M2540.4 252.1 L2545 256.9 L2549.6 252.1" stroke="#ffffff" stroke-width="2.8" stroke-linecap="round" stroke-linejoin="round" fill="none"/><path d="M2569.5 179 L2578.3 156.5 L2587 179 M2572.5 171.5 H2584" stroke="#3a9ee8" stroke-width="2.2" fill="none"/><path d="M2570.5 184.5 H2585 L2570.5 206.3 H2586" stroke="#d0d0d0" stroke-width="2" fill="none"/><path d="M2593.5 169.5 H2624 V175.5 L2613.5 186 V199.5 H2604 V186 L2593.5 175.5 Z" stroke="#d0d0d0" stroke-width="2" fill="none"/><path d="M2640.4 179.4 L2645 184.2 L2649.6 179.4" stroke="#ffffff" stroke-width="2.8" stroke-linecap="round" stroke-linejoin="round" fill="none"/><circle cx="2705.7" cy="175.2" r="19.8" stroke="#d0d0d0" stroke-width="2" fill="none"/><path d="M2691.5 189.5 L2670 211" stroke="#d0d0d0" stroke-width="2"/><path d="M2742.4 179.4 L2747 184.2 L2751.6 179.4" stroke="#ffffff" stroke-width="2.8" stroke-linecap="round" stroke-linejoin="round" fill="none"/></svg><svg style="position:absolute;left:0px;top:286px;" width="400" height="52" viewBox="0 0 400 52" fill="none"><path d="M145.7 21.2 L153 8.7 L160.3 21.2 Z" fill="#c0c0c0"/><path d="M145.7 32.8 L160.3 32.8 L153 45.3 Z" fill="#c0c0c0"/><path d="M202.5 18.5 L219.5 35.5 M219.5 18.5 L202.5 35.5" stroke="#555555" stroke-width="4.2"/><path d="M257.5 26 L266.5 35 L282.5 19" stroke="#555555" stroke-width="4.2" fill="none"/></svg><svg style="position:absolute;left:300px;top:286px;" width="60" height="52" viewBox="0 0 60 52" fill="none"><text x="17" y="36" font-family="Liberation Serif" font-style="italic" font-size="36" fill="#8c8c8c" stroke="#8c8c8c" stroke-width="0.7">f</text><text x="28" y="36" font-family="Liberation Serif" font-style="italic" font-size="34" fill="#8c8c8c" stroke="#8c8c8c" stroke-width="0.6">x</text></svg><svg style="position:absolute;left:2850px;top:300px;" width="30" height="30" viewBox="0 0 30 30" fill="none"><path d="M7.7 7 L22 7 L14.85 19 Z" fill="#c0c0c0"/></svg><div style="position:absolute;left:0px;top:1702px;width:2880px;height:52px;background:#333333;"></div><div style="position:absolute;left:0px;top:1702px;width:2880px;height:2px;background:#5a5a5a;"></div><div style="position:absolute;left:0px;top:1752px;width:2880px;height:2px;background:#1e1e1e;"></div><svg style="position:absolute;left:0px;top:1702px;" width="400" height="52" viewBox="0 0 400 52" fill="none"><path d="M43 18.5 Q44.5 17.8 44.5 19.5 V37.5 Q44.5 39.2 43 38.5 L31.5 29.8 Q30.5 28.5 31.5 27.5 Z" fill="#6a6a6a"/><path d="M77 18.5 Q75.5 17.8 75.5 19.5 V37.5 Q75.5 39.2 77 38.5 L88.5 29.8 Q89.5 28.5 88.5 27.5 Z" fill="#6a6a6a"/><path d="M308 26.5 H328 M318 16.5 V36.5" stroke="#b8b8b8" stroke-width="3.2"/><rect x="354" y="2" width="2" height="41" fill="#4a4a4a"/></svg><div style="position:absolute;left:122px;top:1702px;width:156px;height:45px;background:#ffffff;border-radius:0 0 7px 7px;box-shadow:0 1px 0 #5a5a5a,1px 0 0 #5a5a5a,-1px 0 0 #5a5a5a"></div><div style="position:absolute;left:0;top:1754px;width:2880px;height:46px;background:linear-gradient(#4a4a4a,#424242)"></div><div style="position:absolute;left:2242px;top:1754px;width:74px;height:46px;background:#5c5c5c;"></div><svg style="position:absolute;left:2200px;top:1754px;" width="680" height="46" viewBox="0 0 680 46" fill="none"><path d="M67 11.5 H91 V35 H67 Z M67 19.3 H91 M67 27.2 H91 M75 11.5 V35 M83 11.5 V35" stroke="#f0f0f0" stroke-width="2" fill="none"/><rect x="138" y="11.5" width="26" height="23.5" stroke="#f0f0f0" stroke-width="2" fill="none"/><rect x="144" y="17" width="14" height="12.5" stroke="#f0f0f0" stroke-width="1.6" fill="none"/><path d="M146.5 20.5 H155.5 M146.5 23.3 H155.5 M146.5 26.1 H155.5" stroke="#f0f0f0" stroke-width="1.4"/><path d="M209 11.5 H235 V35 H209 Z M209 22 H224 V11.5 M216.5 11.5 V22" stroke="#f0f0f0" stroke-width="2" fill="none"/><rect x="274" y="21.8" width="16" height="3.4" fill="#f0f0f0"/><rect x="304" y="19.7" width="200" height="8.3" rx="4.15" fill="#7b7b7b"/><circle cx="404" cy="22.5" r="16" fill="#a8a8a8"/><path d="M518 23.5 H534 M526 15.5 V31.5" stroke="#f0f0f0" stroke-width="3.4"/></svg><svg style="position:absolute;left:2690px;top:90px;" width="50" height="40" viewBox="0 0 50 40" fill="none"><path d="M13.5 14.5 V30 H32 V24.5" stroke="#e6e6e6" stroke-width="2" fill="none"/><path d="M18.2 23.2 Q19.5 14 29.5 12 L29.5 7 L36.5 14.2 L29.5 21.5 L29.5 17 Q21.5 17 18.2 23.2 Z" stroke="#e6e6e6" stroke-width="1.8" fill="none" stroke-linejoin="round"/></svg>
<div class="t" style="left:103.47px;top:366.14px;font-size:22.46px;color:#ffffff;-webkit-text-stroke:0.7px #fff;">A</div><div class="t" style="left:233.14px;top:366.14px;font-size:22.46px;color:#ffffff;-webkit-text-stroke:0.7px #fff;">B</div><div class="t" style="left:362.69px;top:366.14px;font-size:22.46px;color:#ffffff;-webkit-text-stroke:0.7px #fff;">C</div><div class="t" style="left:492.46px;top:366.14px;font-size:22.46px;color:#ffffff;-webkit-text-stroke:0.7px #fff;">D</div><div class="t" style="left:623.03px;top:366.14px;font-size:22.46px;color:#ffffff;-webkit-text-stroke:0.7px #fff;">E</div><div class="t" style="left:753.59px;top:366.14px;font-size:22.46px;color:#ffffff;-webkit-text-stroke:0.7px #fff;">F</div><div class="t" style="left:882.46px;top:366.14px;font-size:22.46px;color:#ffffff;-webkit-text-stroke:0.7px #fff;">G</div><div class="t" style="left:1012.80px;top:366.14px;font-size:22.46px;color:#ffffff;-webkit-text-stroke:0.7px #fff;">H</div><div class="t" style="left:1308.86px;top:366.14px;font-size:22.46px;color:#ffffff;-webkit-text-stroke:0.7px #fff;">I</div><div class="t" style="left:1598.06px;top:366.14px;font-size:22.46px;color:#ffffff;-webkit-text-stroke:0.7px #fff;">J</div><div class="t" style="left:1724.69px;top:366.14px;font-size:22.46px;color:#ffffff;-webkit-text-stroke:0.7px #fff;">K</div><div class="t" style="left:1856.15px;top:366.14px;font-size:22.46px;color:#ffffff;-webkit-text-stroke:0.7px #fff;">L</div><div class="t" style="left:1983.57px;top:366.14px;font-size:22.46px;color:#ffffff;-webkit-text-stroke:0.7px #fff;">M</div><div class="t" style="left:2114.80px;top:366.14px;font-size:22.46px;color:#ffffff;-webkit-text-stroke:0.7px #fff;">N</div><div class="t" style="left:2244.35px;top:366.14px;font-size:22.46px;color:#ffffff;-webkit-text-stroke:0.7px #fff;">O</div><div class="t" style="left:2375.14px;top:366.14px;font-size:22.46px;color:#ffffff;-webkit-text-stroke:0.7px #fff;">P</div><div class="t" style="left:2504.35px;top:366.14px;font-size:22.46px;color:#ffffff;-webkit-text-stroke:0.7px #fff;">Q</div><div class="t" style="left:2634.46px;top:366.14px;font-size:22.46px;color:#ffffff;-webkit-text-stroke:0.7px #fff;">R</div><div class="t" style="left:2765.47px;top:366.14px;font-size:22.46px;color:#ffffff;-webkit-text-stroke:0.7px #fff;">S</div><div class="t" style="left:2896.15px;top:366.14px;font-size:22.46px;color:#ffffff;-webkit-text-stroke:0.7px #fff;">T</div><div class="t" style="left:15.28px;top:404.18px;font-size:23.19px;color:#ffffff;-webkit-text-stroke:0.7px #fff;">1</div><div class="t" style="left:15.51px;top:436.18px;font-size:23.19px;color:#ffffff;-webkit-text-stroke:0.7px #fff;">2</div><div class="t" style="left:15.62px;top:468.18px;font-size:23.19px;color:#ffffff;-webkit-text-stroke:0.7px #fff;">3</div><div class="t" style="left:15.62px;top:500.18px;font-size:23.19px;color:#ffffff;-webkit-text-stroke:0.7px #fff;">4</div><div class="t" style="left:15.51px;top:532.18px;font-size:23.19px;color:#ffffff;-webkit-text-stroke:0.7px #fff;">5</div><div class="t" style="left:15.39px;top:564.18px;font-size:23.19px;color:#ffffff;-webkit-text-stroke:0.7px #fff;">6</div><div class="t" style="left:15.51px;top:596.18px;font-size:23.19px;color:#ffffff;-webkit-text-stroke:0.7px #fff;">7</div><div class="t" style="left:15.51px;top:631.18px;font-size:23.19px;color:#ffffff;-webkit-text-stroke:0.7px #fff;">8</div><div class="t" style="left:15.62px;top:669.18px;font-size:23.19px;color:#ffffff;-webkit-text-stroke:0.7px #fff;">9</div><div class="t" style="left:8.71px;top:707.18px;font-size:23.19px;color:#ffffff;-webkit-text-stroke:0.7px #fff;">10</div><div class="t" style="left:9.69px;top:746.18px;font-size:23.19px;color:#ffffff;-webkit-text-stroke:0.7px #fff;">11</div><div class="t" style="left:8.83px;top:785.68px;font-size:23.19px;color:#ffffff;-webkit-text-stroke:0.7px #fff;">12</div><div class="t" style="left:8.71px;top:824.68px;font-size:23.19px;color:#ffffff;-webkit-text-stroke:0.7px #fff;">13</div><div class="t" style="left:8.60px;top:863.18px;font-size:23.19px;color:#ffffff;-webkit-text-stroke:0.7px #fff;">14</div><div class="t" style="left:8.71px;top:901.18px;font-size:23.19px;color:#ffffff;-webkit-text-stroke:0.7px #fff;">15</div><div class="t" style="left:8.71px;top:939.18px;font-size:23.19px;color:#ffffff;-webkit-text-stroke:0.7px #fff;">16</div><div class="t" style="left:8.83px;top:977.18px;font-size:23.19px;color:#ffffff;-webkit-text-stroke:0.7px #fff;">17</div><div class="t" style="left:8.71px;top:1015.18px;font-size:23.19px;color:#ffffff;-webkit-text-stroke:0.7px #fff;">18</div><div class="t" style="left:8.83px;top:1053.18px;font-size:23.19px;color:#ffffff;-webkit-text-stroke:0.7px #fff;">19</div><div class="t" style="left:8.94px;top:1091.18px;font-size:23.19px;color:#ffffff;-webkit-text-stroke:0.7px #fff;">20</div><div class="t" style="left:9.06px;top:1129.18px;font-size:23.19px;color:#ffffff;-webkit-text-stroke:0.7px #fff;">21</div><div class="t" style="left:9.06px;top:1167.18px;font-size:23.19px;color:#ffffff;-webkit-text-stroke:0.7px #fff;">22</div><div class="t" style="left:8.94px;top:1205.18px;font-size:23.19px;color:#ffffff;-webkit-text-stroke:0.7px #fff;">23</div><div class="t" style="left:8.83px;top:1243.18px;font-size:23.19px;color:#ffffff;-webkit-text-stroke:0.7px #fff;">24</div><div class="t" style="left:8.94px;top:1281.18px;font-size:23.19px;color:#ffffff;-webkit-text-stroke:0.7px #fff;">25</div><div class="t" style="left:8.94px;top:1319.18px;font-size:23.19px;color:#ffffff;-webkit-text-stroke:0.7px #fff;">26</div><div class="t" style="left:9.06px;top:1354.18px;font-size:23.19px;color:#ffffff;-webkit-text-stroke:0.7px #fff;">27</div><div class="t" style="left:8.94px;top:1386.18px;font-size:23.19px;color:#ffffff;-webkit-text-stroke:0.7px #fff;">28</div><div class="t" style="left:9.06px;top:1418.18px;font-size:23.19px;color:#ffffff;-webkit-text-stroke:0.7px #fff;">29</div><div class="t" style="left:9.18px;top:1450.18px;font-size:23.19px;color:#ffffff;-webkit-text-stroke:0.7px #fff;">30</div><div class="t" style="left:9.29px;top:1482.18px;font-size:23.19px;color:#ffffff;-webkit-text-stroke:0.7px #fff;">31</div><div class="t" style="left:9.29px;top:1514.18px;font-size:23.19px;color:#ffffff;-webkit-text-stroke:0.7px #fff;">32</div><div class="t" style="left:9.18px;top:1546.18px;font-size:23.19px;color:#ffffff;-webkit-text-stroke:0.7px #fff;">33</div><div class="t" style="left:9.06px;top:1578.18px;font-size:23.19px;color:#ffffff;-webkit-text-stroke:0.7px #fff;">34</div><div class="t" style="left:9.18px;top:1610.18px;font-size:23.19px;color:#ffffff;-webkit-text-stroke:0.7px #fff;">35</div><div class="t" style="left:9.18px;top:1642.18px;font-size:23.19px;color:#ffffff;-webkit-text-stroke:0.7px #fff;">36</div><div class="t" style="left:9.29px;top:1674.18px;font-size:23.19px;color:#ffffff;-webkit-text-stroke:0.7px #fff;">37</div><div style="position:absolute;left:0px;top:1689px;width:44px;height:13px;overflow:hidden"><div style="position:absolute;left:0px;top:-1689px;width:0;height:0"><div class="t" style="left:9.18px;top:1705.88px;font-size:23.19px;color:#ffffff;-webkit-text-stroke:0.7px #fff;">38</div></div></div><div class="t" style="left:267.37px;top:548.00px;font-size:31.43px;color:#000;font-weight:bold;transform:scaleX(0.8661);">IL MIO BUDGET</div><div class="t" style="left:451.15px;top:630.90px;font-size:26.00px;color:#000;font-weight:bold;transform:scaleX(1.0856);">01/01/22</div><div class="t" style="left:580.65px;top:630.90px;font-size:26.00px;color:#000;font-weight:bold;transform:scaleX(1.0856);">01/02/22</div><div class="t" style="left:710.65px;top:630.90px;font-size:26.00px;color:#000;font-weight:bold;transform:scaleX(1.0856);">01/03/22</div><div class="t" style="left:840.65px;top:630.90px;font-size:26.00px;color:#000;font-weight:bold;transform:scaleX(1.0856);">01/04/22</div><div class="t" style="left:179.63px;top:668.90px;font-size:26.00px;color:#00b050;font-weight:bold;transform:scaleX(0.8764);">ENTRATE</div><div class="t" style="left:180.01px;top:706.77px;font-size:26.38px;color:#000;transform:scaleX(0.9428);">Stipendio 1</div><div class="t" style="left:180.01px;top:744.77px;font-size:26.38px;color:#000;transform:scaleX(0.9428);">Stipendio 2</div><div class="t" style="left:496.91px;top:706.77px;font-size:26.38px;color:#000;transform:scaleX(0.9698);">1.000</div><div class="t" style="left:496.91px;top:744.77px;font-size:26.38px;color:#000;transform:scaleX(0.9698);">1.200</div><div class="t" style="left:626.41px;top:706.77px;font-size:26.38px;color:#000;transform:scaleX(0.9698);">1.000</div><div class="t" style="left:626.41px;top:744.77px;font-size:26.38px;color:#000;transform:scaleX(0.9698);">1.000</div><div class="t" style="left:756.41px;top:706.77px;font-size:26.38px;color:#000;transform:scaleX(0.9698);">1.000</div><div class="t" style="left:756.41px;top:744.77px;font-size:26.38px;color:#000;transform:scaleX(0.9698);">1.300</div><div class="t" style="left:886.41px;top:706.77px;font-size:26.38px;color:#000;transform:scaleX(0.9698);">1.000</div><div class="t" style="left:886.41px;top:744.77px;font-size:26.38px;color:#000;transform:scaleX(0.9698);">1.200</div><div class="t" style="left:179.66px;top:1052.90px;font-size:26.00px;color:#ff0000;font-weight:bold;transform:scaleX(0.8576);">USCITE</div><div class="t" style="left:181.00px;top:1090.77px;font-size:26.38px;color:#000;transform:scaleX(1.0681);">Affitto</div><div class="t" style="left:178.81px;top:1128.77px;font-size:26.38px;color:#000;transform:scaleX(1.0375);">Bollette</div><div class="t" style="left:178.98px;top:1166.77px;font-size:26.38px;color:#000;transform:scaleX(0.9571);">Extra</div><div class="t" style="left:180.78px;top:1204.90px;font-size:26.00px;color:#000;font-weight:bold;transform:scaleX(0.8539);">TOTALE</div><div class="t" style="left:517.46px;top:1090.77px;font-size:26.38px;color:#000;transform:scaleX(0.9881);">500</div><div class="t" style="left:646.96px;top:1090.77px;font-size:26.38px;color:#000;transform:scaleX(0.9881);">500</div><div class="t" style="left:776.96px;top:1090.77px;font-size:26.38px;color:#000;transform:scaleX(0.9881);">500</div><div class="t" style="left:906.96px;top:1090.77px;font-size:26.38px;color:#000;transform:scaleX(0.9881);">500</div><div class="t" style="left:531.47px;top:1128.77px;font-size:26.38px;color:#000;transform:scaleX(1.0049);">60</div><div class="t" style="left:661.25px;top:1128.77px;font-size:26.38px;color:#000;transform:scaleX(0.9952);">80</div><div class="t" style="left:791.25px;top:1128.77px;font-size:26.38px;color:#000;transform:scaleX(0.9952);">90</div><div class="t" style="left:920.97px;top:1128.77px;font-size:26.38px;color:#000;transform:scaleX(1.0049);">60</div><div class="t" style="left:516.64px;top:1166.77px;font-size:26.38px;color:#000;transform:scaleX(1.0071);">100</div><div class="t" style="left:646.14px;top:1166.77px;font-size:26.38px;color:#000;transform:scaleX(1.0071);">120</div><div class="t" style="left:791.25px;top:1166.77px;font-size:26.38px;color:#000;transform:scaleX(0.9952);">80</div><div class="t" style="left:921.25px;top:1166.77px;font-size:26.38px;color:#000;transform:scaleX(0.9952);">90</div><div class="t" style="left:517.19px;top:1204.77px;font-size:26.38px;color:#000;transform:scaleX(0.9943);">660</div><div class="t" style="left:646.69px;top:1204.77px;font-size:26.38px;color:#000;transform:scaleX(0.9943);">700</div><div class="t" style="left:776.69px;top:1204.77px;font-size:26.38px;color:#000;transform:scaleX(0.9943);">670</div><div class="t" style="left:906.69px;top:1204.77px;font-size:26.38px;color:#000;transform:scaleX(0.9943);">650</div><div class="t" style="left:1089.74px;top:744.90px;font-size:26.00px;color:#000;font-weight:bold;transform:scaleX(0.9933);">Totale</div><div class="t" style="left:1597.27px;top:744.77px;font-size:26.38px;color:#000;transform:scaleX(0.9797);">8.700</div><div class="t" style="left:1088.99px;top:785.90px;font-size:26.00px;color:#000;font-weight:bold;transform:scaleX(0.9725);">Quanti stipendi da € 1.200</div><div class="t" style="left:1647.14px;top:785.77px;font-size:26.38px;color:#000;transform:scaleX(1.0302);">2</div><div class="t" style="left:1089.51px;top:824.90px;font-size:26.00px;color:#000;font-weight:bold;transform:scaleX(0.9390);">Stipendio massimo</div><div class="t" style="left:1597.70px;top:824.77px;font-size:26.38px;color:#000;transform:scaleX(0.9730);">1.300</div><div class="t" style="left:1089.51px;top:862.90px;font-size:26.00px;color:#000;font-weight:bold;transform:scaleX(0.9512);">Stipendio minimo</div><div class="t" style="left:1597.70px;top:862.77px;font-size:26.38px;color:#000;transform:scaleX(0.9730);">1.000</div><div class="t" style="left:1089.49px;top:1204.90px;font-size:26.00px;color:#000;font-weight:bold;transform:scaleX(0.9711);">Numero bollette da pagare</div><div class="t" style="left:1648.01px;top:1204.77px;font-size:26.38px;color:#000;transform:scaleX(0.9292);">4</div><div class="t" style="left:1089.01px;top:1242.90px;font-size:26.00px;color:#000;font-weight:bold;transform:scaleX(0.9557);">Giorni prima di ultimo affitto</div><div class="t" style="left:1637.53px;top:1244.49px;font-size:21.45px;color:#000;transform:scaleX(1.0169);">90</div><div style="position:absolute;left:1086px;top:1261px;width:450px;height:38px;overflow:hidden"><div style="position:absolute;left:-1086px;top:-1261px;width:0;height:0"><div class="t" style="left:1089.01px;top:1280.90px;font-size:26.00px;color:#000;font-weight:bold;transform:scaleX(0.9508);">Giorni lavorativi prima di ultimo affitto</div></div></div><div class="t" style="left:1637.30px;top:1282.49px;font-size:21.45px;color:#000;transform:scaleX(1.0268);">65</div><div class="t" style="left:1088.51px;top:1318.90px;font-size:26.00px;color:#000;font-weight:bold;transform:scaleX(0.9551);">Media spese per mese</div><div class="t" style="left:1625.41px;top:1320.49px;font-size:21.45px;color:#000;transform:scaleX(1.0165);">670</div><div class="t" style="left:1270.19px;top:40.20px;font-size:29.71px;color:#ffffff;font-weight:bold;transform:scaleX(0.9074);">05) Gestione spesa con Excel</div><div class="t" style="left:21.56px;top:104.60px;font-size:27.14px;color:#e2e2e2;font-weight:bold;transform:scaleX(1.0072);">Home</div><div class="t" style="left:142.94px;top:104.60px;font-size:27.14px;color:#e2e2e2;font-weight:bold;transform:scaleX(0.9590);">Inserisci</div><div class="t" style="left:297.85px;top:104.60px;font-size:27.14px;color:#e2e2e2;font-weight:bold;transform:scaleX(0.9493);">Disegno</div><div class="t" style="left:449.77px;top:104.60px;font-size:27.14px;color:#e2e2e2;font-weight:bold;transform:scaleX(0.9375);">Layout di pagina</div><div class="t" style="left:703.25px;top:104.60px;font-size:27.14px;color:#e2e2e2;font-weight:bold;transform:scaleX(0.9538);">Formule</div><div class="t" style="left:853.15px;top:104.60px;font-size:27.14px;color:#e2e2e2;font-weight:bold;transform:scaleX(1.0124);">Dati</div><div class="t" style="left:951.68px;top:104.60px;font-size:27.14px;color:#e2e2e2;font-weight:bold;transform:scaleX(0.9318);">Revisione</div><div class="t" style="left:1123.30px;top:104.60px;font-size:27.14px;color:#e2e2e2;font-weight:bold;transform:scaleX(0.9512);">Visualizza</div><div class="t" style="left:2736.62px;top:108.80px;font-size:27.14px;color:#ececec;font-weight:bold;transform:scaleX(0.9030);">Condividi</div><div class="t" style="left:32.97px;top:234.03px;font-size:23.04px;color:#f2f2f2;transform:scaleX(0.9780);-webkit-text-stroke:0.35px #f2f2f2;">Incolla</div><div class="t" style="left:241.72px;top:177.12px;font-size:25.07px;color:#f2f2f2;transform:scaleX(1.0198);-webkit-text-stroke:0.35px #f2f2f2;">Calibri (Corpo)</div><div class="t" style="left:526.93px;top:176.91px;font-size:27.10px;color:#f2f2f2;transform:scaleX(0.8779);-webkit-text-stroke:0.35px #f2f2f2;">12</div><div class="t" style="left:243.78px;top:240.20px;font-size:28.29px;color:#d4d4d4;font-weight:bold;transform:scaleX(0.9046);">G</div><div class="t" style="left:296.25px;top:240.06px;font-size:28.70px;color:#d4d4d4;font-style:italic;transform:scaleX(0.8712);">C</div><div class="t" style="left:350.43px;top:240.06px;font-size:28.70px;color:#d4d4d4;font-style:italic;transform:scaleX(0.6534);">S</div><div class="t" style="left:1142.15px;top:178.08px;font-size:23.19px;color:#f2f2f2;transform:scaleX(0.9732);-webkit-text-stroke:0.35px #f2f2f2;">Testo a capo</div><div class="t" style="left:1141.41px;top:241.89px;font-size:22.32px;color:#f2f2f2;transform:scaleX(1.0148);-webkit-text-stroke:0.35px #f2f2f2;">Unisci e centra</div><div class="t" style="left:1374.26px;top:177.68px;font-size:24.64px;color:#f2f2f2;transform:scaleX(1.0027);-webkit-text-stroke:0.35px #f2f2f2;">Generale</div><div class="t" style="left:1717.16px;top:234.09px;font-size:21.74px;color:#f2f2f2;transform:scaleX(1.0555);-webkit-text-stroke:0.35px #f2f2f2;">Formattazione</div><div class="t" style="left:1727.48px;top:257.59px;font-size:21.74px;color:#f2f2f2;transform:scaleX(1.0536);-webkit-text-stroke:0.35px #f2f2f2;">condizionale</div><div class="t" style="left:1893.47px;top:234.09px;font-size:21.74px;color:#f2f2f2;transform:scaleX(1.0513);-webkit-text-stroke:0.35px #f2f2f2;">Formatta</div><div class="t" style="left:1875.59px;top:257.59px;font-size:21.74px;color:#f2f2f2;transform:scaleX(1.0443);-webkit-text-stroke:0.35px #f2f2f2;">come tabella</div><div class="t" style="left:2040.61px;top:234.09px;font-size:21.74px;color:#f2f2f2;transform:scaleX(1.1339);-webkit-text-stroke:0.35px #f2f2f2;">Stili</div><div class="t" style="left:2036.09px;top:257.59px;font-size:21.74px;color:#f2f2f2;transform:scaleX(1.0473);-webkit-text-stroke:0.35px #f2f2f2;">cella</div><div class="t" style="left:2155.30px;top:234.19px;font-size:21.74px;color:#f2f2f2;transform:scaleX(1.0730);-webkit-text-stroke:0.35px #f2f2f2;">Inserisci</div><div class="t" style="left:2262.17px;top:234.19px;font-size:21.74px;color:#f2f2f2;transform:scaleX(0.9968);-webkit-text-stroke:0.35px #f2f2f2;">Elimina</div><div class="t" style="left:2355.88px;top:234.19px;font-size:21.74px;color:#f2f2f2;transform:scaleX(1.0457);-webkit-text-stroke:0.35px #f2f2f2;">Formato</div><div class="t" style="left:2574.11px;top:234.19px;font-size:21.74px;color:#f2f2f2;transform:scaleX(1.0238);-webkit-text-stroke:0.35px #f2f2f2;">Ordina</div><div class="t" style="left:2574.84px;top:257.79px;font-size:21.74px;color:#f2f2f2;transform:scaleX(1.0991);-webkit-text-stroke:0.35px #f2f2f2;">e filtra</div><div class="t" style="left:2676.26px;top:234.19px;font-size:21.74px;color:#f2f2f2;transform:scaleX(1.0032);-webkit-text-stroke:0.35px #f2f2f2;">Trova e</div><div class="t" style="left:2664.96px;top:257.79px;font-size:21.74px;color:#f2f2f2;transform:scaleX(1.0120);-webkit-text-stroke:0.35px #f2f2f2;">seleziona</div><div class="t" style="left:17.99px;top:311.07px;font-size:26.09px;color:#ececec;transform:scaleX(0.9645);">P9</div><div class="t" style="left:157.40px;top:1726.50px;font-size:25.14px;color:#1e7b45;font-weight:bold;transform:scaleX(0.9310);">Foglio1</div><div class="t" style="left:46.93px;top:1777.28px;font-size:23.77px;color:#e8e8e8;transform:scaleX(1.0912);">Pronto</div><div class="t" style="left:2766.21px;top:1777.22px;font-size:25.07px;color:#e8e8e8;transform:scaleX(1.0221);">100%</div>
</body></html>
